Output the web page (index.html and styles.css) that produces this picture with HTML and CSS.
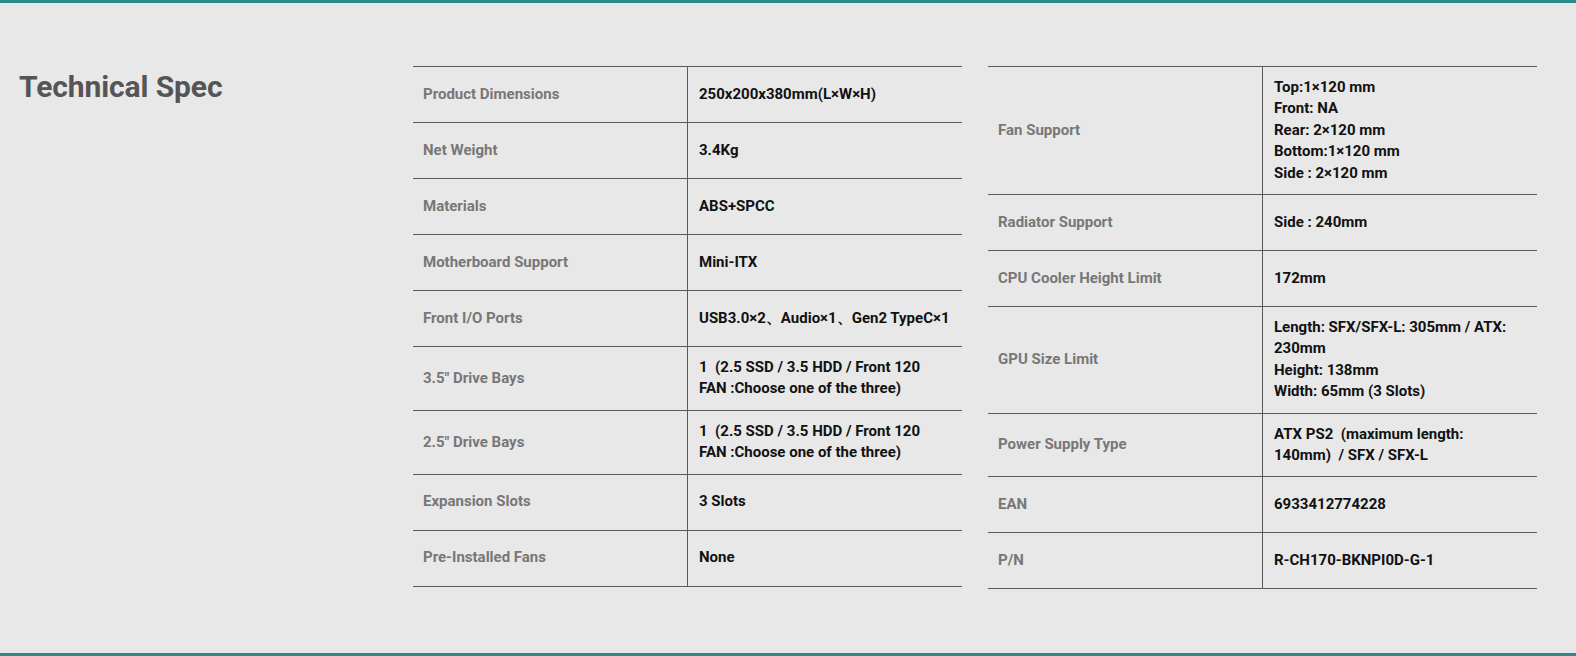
FILE: index.html
```html
<!DOCTYPE html>
<html lang="en">
<head>
<meta charset="utf-8">
<title>Technical Spec</title>
<link rel="stylesheet" href="styles.css">
</head>
<body>
<section class="spec">
  <h2 class="spec-title">Technical Spec</h2>
  <table class="spec-table">
    <tr><th>Product Dimensions</th><td>250x200x380mm(L×W×H)</td></tr>
    <tr><th>Net Weight</th><td>3.4Kg</td></tr>
    <tr><th>Materials</th><td>ABS+SPCC</td></tr>
    <tr><th>Motherboard Support</th><td>Mini-ITX</td></tr>
    <tr><th>Front I/O Ports</th><td class="one-line">USB3.0×2、Audio×1、Gen2 TypeC×1</td></tr>
    <tr><th>3.5" Drive Bays</th><td>1&nbsp;&nbsp;(2.5 SSD / 3.5 HDD / Front 120 FAN :Choose one of the three)</td></tr>
    <tr><th>2.5" Drive Bays</th><td>1&nbsp;&nbsp;(2.5 SSD / 3.5 HDD / Front 120 FAN :Choose one of the three)</td></tr>
    <tr><th>Expansion Slots</th><td>3 Slots</td></tr>
    <tr><th>Pre-Installed Fans</th><td>None</td></tr>
  </table>
  <table class="spec-table">
    <tr><th>Fan Support</th><td>Top:1×120 mm<br>Front: NA<br>Rear: 2×120 mm<br>Bottom:1×120 mm<br>Side : 2×120 mm</td></tr>
    <tr><th>Radiator Support</th><td>Side : 240mm</td></tr>
    <tr><th>CPU Cooler Height Limit</th><td>172mm</td></tr>
    <tr><th>GPU Size Limit</th><td>Length: SFX/SFX-L: 305mm / ATX: 230mm<br>Height: 138mm<br>Width: 65mm (3 Slots)</td></tr>
    <tr><th>Power Supply Type</th><td>ATX PS2&nbsp;&nbsp;(maximum length: 140mm)&nbsp;&nbsp;/ SFX / SFX-L</td></tr>
    <tr><th>EAN</th><td>6933412774228</td></tr>
    <tr><th>P/N</th><td>R-CH170-BKNPI0D-G-1</td></tr>
  </table>
</section>
</body>
</html>
```
FILE: styles.css
```css
html, body {
  margin: 0;
  padding: 0;
}
body {
  background: #e8e8e8;
  font-family: Roboto, "Liberation Sans", sans-serif;
  border-top: 3px solid #2b8a8a;
  border-bottom: 3px solid #2b8a8a;
  height: 650px;
  overflow: hidden;
}
.spec {
  display: grid;
  grid-template-columns: 368px 549px 549px;
  column-gap: 26px;
  align-items: start;
  padding: 63px 0 0 19px;
}
.spec-title {
  margin: 0;
  padding-top: 3px;
  font-size: 30px;
  line-height: 36px;
  font-weight: 700;
  color: #555;
  letter-spacing: -0.1px;
}
.spec-table {
  width: 549px;
  border-collapse: collapse;
  table-layout: fixed;
  border-top: 1px solid #5a5a5a;
}
.spec-table tr {
  border-bottom: 1px solid #5a5a5a;
}
.spec-table th,
.spec-table td {
  height: 56px;
  box-sizing: border-box;
  padding: 10px 10px;
  font-size: 15px;
  line-height: 21.4px;
  vertical-align: middle;
  text-align: left;
  font-weight: 700;
}
.spec-table th {
  width: 50%;
  color: #777;
  border-right: 1px solid #5a5a5a;
}
.spec-table td {
  color: #111;
  padding-left: 11px;
  padding-right: 12.5px;
}
.spec-table td.one-line {
  white-space: nowrap;
}
```
